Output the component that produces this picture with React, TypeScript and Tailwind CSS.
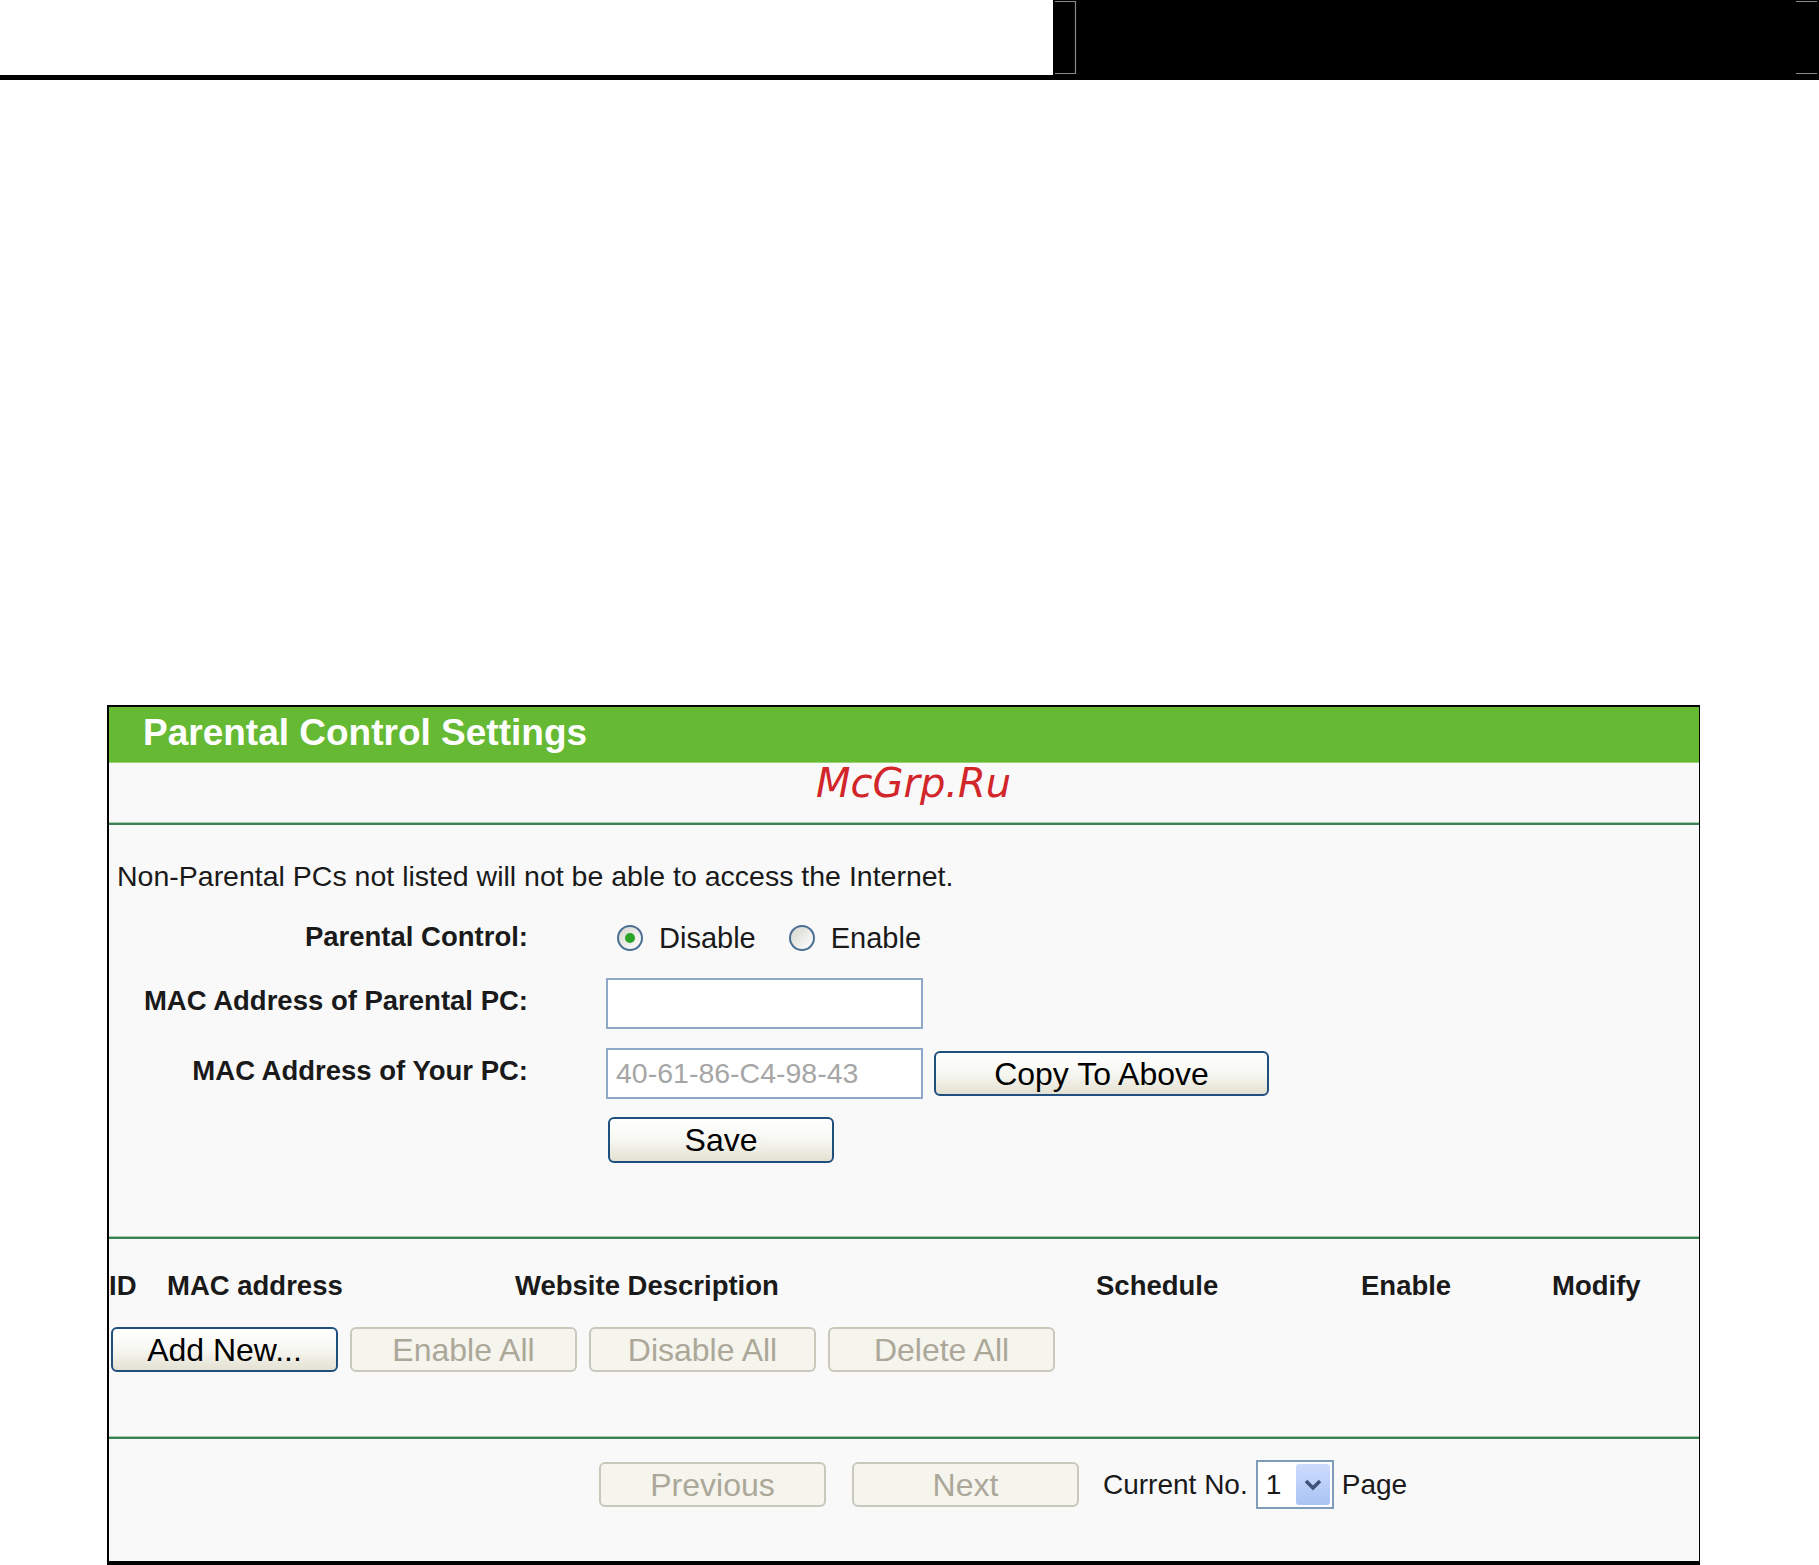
import React from "react";

function Radio({ checked }: { checked?: boolean }) {
  return (
    <span className="w-[26px] h-[26px] rounded-full border-2 border-[#4a6f93] bg-linear-to-br from-[#d6d6ce] to-white flex items-center justify-center shrink-0">
      {checked ? <span className="w-[10px] h-[10px] rounded-full bg-[#2aa52a]" /> : null}
    </span>
  );
}

function XpButton({
  children,
  disabled,
  className = "",
}: {
  children: React.ReactNode;
  disabled?: boolean;
  className?: string;
}) {
  const tone = disabled
    ? "border-[#cac8bb] bg-[#f5f4ed] text-[#aca899]"
    : "border-[#1f4f7f] bg-linear-to-b from-white via-[#f7f7f2] to-[#e4e1d2] text-black";
  return (
    <div
      className={`h-[45px] rounded-[6px] border-2 flex items-center justify-center text-[32px] leading-none ${tone} ${className}`}
    >
      {children}
    </div>
  );
}

function Row({
  label,
  children,
  className = "",
  labelClass = "",
}: {
  label: string;
  children: React.ReactNode;
  className?: string;
  labelClass?: string;
}) {
  return (
    <div className={`flex items-center ${className}`}>
      <div className={`w-[419px] text-right font-bold text-[27.5px] leading-[32px] ${labelClass}`}>{label}</div>
      <div className="ml-[78px] flex items-center h-full">{children}</div>
    </div>
  );
}

function Divider() {
  return <div className="h-[3px] bg-[#3d8157] border-t border-[#a8cdb3]" />;
}

export default function App() {
  return (
    <div className="w-[1819px] h-[1565px] bg-white overflow-hidden font-['Liberation_Sans',Arial,sans-serif] text-[#1a1a1a]">
      {/* top bar */}
      <div className="flex h-[80px]">
        <div className="w-[1053px] border-b-[5px] border-black" />
        <div className="relative flex-1 bg-black">
          <svg className="absolute left-0 top-0" width="766" height="80" viewBox="0 0 766 80">
            <path d="M2 1.5H22.5V73.5H2" stroke="#8a8a8a" fill="none" strokeWidth="1.2" />
            <path d="M743 1.5H764M743 73.5H764" stroke="#8a8a8a" strokeWidth="1.2" />
          </svg>
        </div>
      </div>

      {/* panel */}
      <div className="ml-[107px] mt-[625px] w-[1593px] border-l-2 border-r border-t-2 border-b-4 border-black">
        <div className="h-[56px] bg-[#66b933] border-b border-[#9ad37a] pl-[34px] text-white font-bold text-[37px] leading-[52px]">
          Parental Control Settings
        </div>
        <div className="h-[59px] bg-[#f9f9f9] pl-[707px]">
          <span className="block font-['DejaVu_Sans',sans-serif] italic text-[40px] leading-[40px] text-[#d2262b]">
            McGrp.Ru
          </span>
        </div>
        <Divider />

        <div className="h-[411px] bg-[#f9f9f9] pt-[35px]">
          <div className="pl-[8px] text-[28.5px] leading-[32px]">
            Non-Parental PCs not listed will not be able to access the Internet.
          </div>
          <Row label="Parental Control:" className="mt-[26px] h-[40px]" labelClass="mb-[2px]">
            <div className="ml-[11px] flex items-center text-[29px] leading-[32px]">
              <Radio checked />
              <span className="ml-[16px]">Disable</span>
              <span className="ml-[33px]">
                <Radio />
              </span>
              <span className="ml-[16px]">Enable</span>
            </div>
          </Row>
          <Row label="MAC Address of Parental PC:" className="mt-[20px] h-[51px]" labelClass="mb-[6px]">
            <div className="w-[317px] h-[51px] border-2 border-[#8fa8c8] bg-white" />
          </Row>
          <Row label="MAC Address of Your PC:" className="mt-[19px] h-[51px]" labelClass="mb-[6px]">
            <div className="w-[317px] h-[51px] border-2 border-[#8fa8c8] bg-white pl-[8px] flex items-center text-[28.5px] text-[#a6a6a6]">
              40-61-86-C4-98-43
            </div>
            <XpButton className="ml-[11px] w-[335px]">Copy To Above</XpButton>
          </Row>
          <div className="mt-[18px] ml-[499px]">
            <XpButton className="w-[226px] h-[46px]">Save</XpButton>
          </div>
        </div>
        <Divider />

        <div className="h-[197px] bg-[#f9f9f9] pt-[31px]">
          <div className="flex font-bold text-[27.5px] leading-[32px]">
            <div className="w-[58px]">ID</div>
            <div className="w-[348px]">MAC address</div>
            <div className="w-[581px]">Website Description</div>
            <div className="w-[265px]">Schedule</div>
            <div className="w-[191px]">Enable</div>
            <div>Modify</div>
          </div>
          <div className="mt-[25px] ml-[2px] flex gap-[12px]">
            <XpButton className="w-[227px]">Add New...</XpButton>
            <XpButton disabled className="w-[227px]">Enable All</XpButton>
            <XpButton disabled className="w-[227px]">Disable All</XpButton>
            <XpButton disabled className="w-[227px]">Delete All</XpButton>
          </div>
        </div>
        <Divider />

        <div className="h-[122px] bg-[#f9f9f9] pt-[21px] pl-[490px]">
          <div className="flex items-center h-[49px] text-[28px]">
            <XpButton disabled className="w-[227px]">Previous</XpButton>
            <XpButton disabled className="ml-[26px] w-[227px]">Next</XpButton>
            <span className="ml-[24px]">Current No.</span>
            <div className="ml-[8px] w-[78px] h-[49px] border-2 border-[#7f9db9] bg-white flex items-center justify-between pl-[8px] pr-[2px]">
              <span>1</span>
              <span className="w-[34px] h-[41px] rounded-[3px] bg-linear-to-b from-[#cddcfc] to-[#a9c3f4] flex items-center justify-center">
                <svg width="20" height="16" viewBox="0 0 20 16">
                  <path d="M3 4l7 7 7-7" stroke="#3f5378" strokeWidth="3.5" fill="none" />
                </svg>
              </span>
            </div>
            <span className="ml-[8px]">Page</span>
          </div>
        </div>
      </div>
    </div>
  );
}
